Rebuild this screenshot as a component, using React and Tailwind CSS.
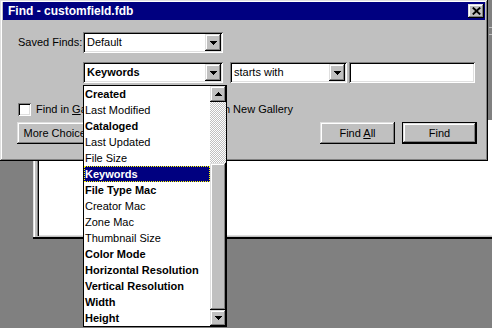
import React from 'react';

// field list shown in the open dropdown
const fields = [
  { label: 'Created', bold: true },
  { label: 'Last Modified' },
  { label: 'Cataloged', bold: true },
  { label: 'Last Updated' },
  { label: 'File Size' },
  { label: 'Keywords', bold: true, selected: true },
  { label: 'File Type Mac', bold: true },
  { label: 'Creator Mac' },
  { label: 'Zone Mac' },
  { label: 'Thumbnail Size' },
  { label: 'Color Mode', bold: true },
  { label: 'Horizontal Resolution', bold: true },
  { label: 'Vertical Resolution', bold: true },
  { label: 'Width', bold: true },
  { label: 'Height', bold: true },
];

const raised =
  'bg-[#c0c0c0] shadow-[inset_-1px_-1px_0_#000000,inset_1px_1px_0_#dfdfdf,inset_-2px_-2px_0_#808080,inset_2px_2px_0_#ffffff]';
const sunken =
  'bg-white shadow-[inset_1px_1px_0_#808080,inset_-1px_-1px_0_#ffffff,inset_2px_2px_0_#000000,inset_-2px_-2px_0_#dfdfdf]';

const Arrow = ({ up }) => (
  <svg width="7" height="4" viewBox="0 0 7 4" shapeRendering="crispEdges" className={up ? 'rotate-180' : ''}>
    <rect x="0" y="0" width="7" height="1" fill="#000" />
    <rect x="1" y="1" width="5" height="1" fill="#000" />
    <rect x="2" y="2" width="3" height="1" fill="#000" />
    <rect x="3" y="3" width="1" height="1" fill="#000" />
  </svg>
);

const Combo = ({ className, children }) => (
  <div className={`h-[21px] flex items-center p-[2px] ${sunken} ${className}`}>
    <span className="flex-1 pl-[2px] whitespace-nowrap overflow-hidden">{children}</span>
    <div className={`w-[16px] h-[17px] flex items-center justify-center ${raised}`}>
      <Arrow />
    </div>
  </div>
);

const Checkbox = () => <div className={`w-[13px] h-[13px] shrink-0 ${sunken}`} />;

const Button = ({ className, children }) => (
  <div className={`h-[22px] flex items-center justify-center ${raised} ${className}`}>{children}</div>
);

export default function App() {
  return (
    <div className="relative w-[492px] h-[328px] overflow-hidden bg-[#808080] font-['Liberation_Sans',Arial,sans-serif] text-[11px] text-black">
      {/* window behind, right edge */}
      <div className="absolute left-[486px] top-[-4px] w-[20px] h-[170px] bg-[#808080] border-l-2 border-[#c0c0c0]">
        <div className="ml-[1px] mt-[31px] h-[8px] border-y border-[#c0c0c0]" />
      </div>

      {/* window behind, white content */}
      <div className="absolute left-[33px] top-[120px] w-[470px] h-[119px] bg-[#c0c0c0] border-b-2 border-black shadow-[inset_1px_0_0_#dfdfdf,inset_2px_0_0_#ffffff]">
        <div className="ml-[4px] mb-[1px] h-[116px] bg-white shadow-[inset_1px_0_0_#808080,inset_2px_0_0_#000000,inset_0_-1px_0_#dfdfdf]" />
      </div>

      {/* Find dialog */}
      <div className="absolute left-0 top-0 w-[488px] h-[161px] pt-[2px] px-[3px] bg-[#c0c0c0] shadow-[inset_-1px_-1px_0_#000000,inset_1px_1px_0_#dfdfdf,inset_-2px_-2px_0_#808080,inset_2px_2px_0_#ffffff]">
        <div className="h-[18px] bg-[#000080] flex items-center justify-between pl-[5px] pr-[1px]">
          <span className="text-white font-bold text-[12px]">Find - customfield.fdb</span>
          <div className={`w-[16px] h-[14px] flex items-center justify-center ${raised}`}>
            <svg width="9" height="8" viewBox="0 0 9 8">
              <path d="M0.8 0.6L8.2 7.4M8.2 0.6L0.8 7.4" stroke="#000" strokeWidth="2" />
            </svg>
          </div>
        </div>

        <div className="mt-[12px] pl-[15px] flex items-center h-[21px]">
          <span className="w-[65px]">Saved Finds:</span>
          <Combo className="w-[140px]">Default</Combo>
        </div>

        <div className="mt-[9px] pl-[80px] flex items-center h-[21px]">
          <Combo className="w-[140px] font-bold">Keywords</Combo>
          <Combo className="ml-[7px] w-[117px]">starts with</Combo>
          <div className={`ml-[2px] w-[126px] h-[21px] ${sunken}`} />
        </div>

        <div className="mt-[20px] pl-[15px] w-[290px] h-[13px] flex items-center justify-between">
          <div className="flex items-center gap-[5px]">
            <Checkbox />
            <span>
              Find in <span className="underline">G</span>allery
            </span>
          </div>
          <div className="flex items-center gap-[5px]">
            <Checkbox />
            <span>Open in New Gallery</span>
          </div>
        </div>

        <div className="mt-[6px] pl-[14px] flex">
          <Button className="w-[90px]">More Choices...</Button>
          <Button className="ml-[213px] w-[75px]">
            <span>
              Find <span className="underline">A</span>ll
            </span>
          </Button>
          <div className="ml-[7px] w-[75px] h-[22px] border border-black">
            <div className={`h-full flex items-center justify-center ${raised}`}>Find</div>
          </div>
        </div>
      </div>

      {/* open field dropdown */}
      <div className="absolute left-[83px] top-[85px] w-[144px] h-[242px] bg-white border border-black flex">
        <div className="w-[126px] flex flex-col">
          {fields.map((f) =>
            f.selected ? (
              <div
                key={f.label}
                className="h-[16px] flex items-center bg-[#000080] text-white font-bold border border-dotted border-[#ffff00] whitespace-nowrap"
              >
                {f.label}
              </div>
            ) : (
              <div
                key={f.label}
                className={`h-[16px] flex items-center pl-[1px] whitespace-nowrap ${f.bold ? 'font-bold' : ''}`}
              >
                {f.label}
              </div>
            )
          )}
        </div>
        <div className="w-[16px] flex flex-col">
          <div className={`h-[16px] flex items-center justify-center ${raised}`}>
            <Arrow up />
          </div>
          <div className="h-[61px] bg-[image:repeating-conic-gradient(#c0c0c0_0_25%,#ffffff_0_50%)] bg-[length:2px_2px]" />
          <div className={`h-[147px] ${raised}`} />
          <div className={`h-[16px] flex items-center justify-center ${raised}`}>
            <Arrow />
          </div>
        </div>
      </div>
    </div>
  );
}
